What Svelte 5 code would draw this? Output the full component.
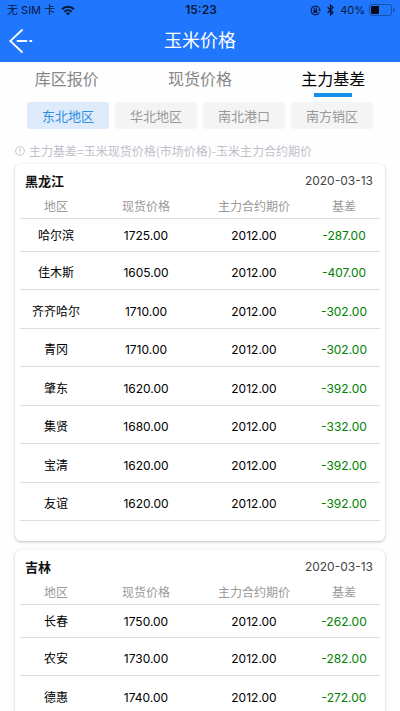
<script>
  let tabs = ['库区报价', '现货价格', '主力基差']
  let activeTab = '主力基差'

  let areas = ['东北地区', '华北地区', '南北港口', '南方销区']
  let activeArea = '东北地区'

  let provinces = [
    {
      name: '黑龙江',
      date: '2020-03-13',
      rows: [
        ['哈尔滨', '1725.00', '2012.00', '-287.00'],
        ['佳木斯', '1605.00', '2012.00', '-407.00'],
        ['齐齐哈尔', '1710.00', '2012.00', '-302.00'],
        ['青冈', '1710.00', '2012.00', '-302.00'],
        ['肇东', '1620.00', '2012.00', '-392.00'],
        ['集贤', '1680.00', '2012.00', '-332.00'],
        ['宝清', '1620.00', '2012.00', '-392.00'],
        ['友谊', '1620.00', '2012.00', '-392.00']
      ]
    },
    {
      name: '吉林',
      date: '2020-03-13',
      rows: [
        ['长春', '1750.00', '2012.00', '-262.00'],
        ['农安', '1730.00', '2012.00', '-282.00'],
        ['德惠', '1740.00', '2012.00', '-272.00']
      ]
    }
  ]
</script>

<header>
  <div class="status">
    <div class="side">
      <span>无 SIM 卡</span>
      <svg width="14" height="11" viewBox="0 0 14 11" fill="none" stroke="currentColor" stroke-width="2">
        <path d="M1 4.2a8.5 8.5 0 0 1 12 0M3.3 6.7a5.3 5.3 0 0 1 7.4 0" />
        <path d="M7 10.4L4.9 8.3a3 3 0 0 1 4.2 0z" fill="currentColor" stroke="none" />
      </svg>
    </div>
    <div class="time">15:23</div>
    <div class="side right">
      <svg width="11" height="11" viewBox="0 0 11 11" fill="none" stroke="currentColor" stroke-width="1.1">
        <path d="M9.3 7.6A4.4 4.4 0 1 1 9.8 4.6" />
        <path d="M8.2 4.6h2.8L9.7 6.5z" fill="currentColor" stroke="none" />
        <rect x="3.4" y="4.9" width="3.8" height="2.9" fill="currentColor" stroke="none" />
        <path d="M4.1 5V4a1.2 1.2 0 0 1 2.4 0v1" stroke-width=".9" />
      </svg>
      <svg class="bluetooth" width="7" height="12" viewBox="0 0 7 12" fill="none" stroke="currentColor" stroke-width="1.3">
        <path d="M.6 3.3L6 8.5 3.5 10.8V1.2L6 3.5.6 8.7" />
      </svg>
      <span>40%</span>
      <svg width="26" height="12" viewBox="0 0 26 12" fill="none">
        <rect x=".5" y=".5" width="22" height="11" rx="2" stroke="#1650a8" />
        <rect x="2" y="2" width="8" height="8" rx="1" fill="#030b1c" />
        <path d="M24 4v4a2 2 0 0 0 0-4z" fill="#1650a8" />
      </svg>
    </div>
  </div>
  <div class="nav">
    <button class="back" aria-label="返回">
      <svg width="24" height="24" viewBox="0 0 24 24" fill="none" stroke="currentColor" stroke-width="1.8" stroke-linecap="round">
        <path d="M13 1L1.2 12 13 23M8.5 12h9M21.2 12h1.2" />
      </svg>
    </button>
    <h1>玉米价格</h1>
  </div>
</header>

<main>
  <div class="tabs">
    {#each tabs as tab}
      <button class:active={tab === activeTab} on:click={() => activeTab = tab}>{tab}</button>
    {/each}
  </div>

  <div class="areas">
    {#each areas as area}
      <button class:active={area === activeArea} on:click={() => activeArea = area}>{area}</button>
    {/each}
  </div>

  <p class="note">
    <svg width="10" height="10" viewBox="0 0 10 10" fill="none" stroke="currentColor">
      <circle cx="5" cy="5" r="4.4" stroke-width=".9" />
      <path d="M5 2.3v3.4M5 6.7v1" />
    </svg>
    主力基差=玉米现货价格(市场价格)-玉米主力合约期价
  </p>

  {#each provinces as province}
    <section class="card">
      <div class="title">
        <h2>{province.name}</h2>
        <span>{province.date}</span>
      </div>
      <table>
        <thead>
          <tr>
            <th class="place">地区</th>
            <th>现货价格</th>
            <th>主力合约期价</th>
            <th class="place">基差</th>
          </tr>
        </thead>
        <tbody>
          {#each province.rows as row}
            <tr>
              <td>{row[0]}</td>
              <td>{row[1]}</td>
              <td>{row[2]}</td>
              <td class="basis">{row[3]}</td>
            </tr>
          {/each}
        </tbody>
      </table>
    </section>
  {/each}
</main>

<style>
  :global(body) {
    background-color: #fefefe;
    font-family: Inter, "Noto Sans CJK SC", sans-serif;
  }
  button {
    font-family: inherit;
    border: none;
    padding: 0;
    cursor: pointer;
  }

  header {
    background-color: #2077fd;
  }
  .status {
    display: flex;
    align-items: center;
    height: 20px;
    padding: 0 5px 0 7px;
    color: #06183a;
    font-size: 11px;
    line-height: 20px;
  }
  .side {
    display: flex;
    align-items: center;
    flex: 1;
    gap: 6px;
  }
  .right {
    justify-content: flex-end;
    gap: 4px;
  }
  .bluetooth {
    margin: 0 2px;
  }
  .time {
    font-size: 12px;
    font-weight: 600;
  }
  .nav {
    display: grid;
    grid-template-columns: 40px 1fr 40px;
    align-items: center;
    height: 42px;
    color: #fff;
  }
  .back {
    display: flex;
    padding-left: 9px;
    background: none;
    color: inherit;
  }
  h1 {
    margin: 0;
    font-size: 18px;
    font-weight: 400;
    line-height: 42px;
    text-align: center;
  }

  .tabs {
    display: flex;
    height: 35px;
  }
  .tabs button {
    display: flex;
    flex-direction: column;
    align-items: center;
    justify-content: space-between;
    flex: 1;
    background: none;
    color: #888;
    font-size: 16px;
    line-height: 35px;
  }
  .tabs .active {
    color: #000;
  }
  .tabs .active::after {
    content: "";
    width: 38px;
    height: 4px;
    margin-top: -4px;
    background-color: #168de8;
  }

  .areas {
    display: flex;
    gap: 6px;
    padding: 5px 27px 0;
  }
  .areas button {
    flex: 1;
    height: 27px;
    border-radius: 3px;
    background-color: #f4f4f4;
    color: #999;
    font-size: 13px;
  }
  .areas .active {
    background-color: #deebfb;
    color: #2f8ee0;
  }

  .note {
    display: flex;
    align-items: center;
    gap: 4px;
    margin: 12px 15px 4px;
    color: #bdc1ca;
    font-family: "Noto Sans CJK SC", sans-serif;
    font-size: 12px;
    line-height: 19px;
  }

  .card {
    margin: 0 15px 9px;
    padding: 0 5px 20px;
    border-radius: 6px;
    background-color: #fff;
    box-shadow: 0 1px 3px rgba(0, 0, 0, .25);
  }
  .title {
    display: flex;
    align-items: center;
    justify-content: space-between;
    height: 32px;
    padding: 0 7px 0 5px;
    color: #444;
    font-size: 12px;
  }
  h2 {
    margin: 0;
    color: #111;
    font-size: 13px;
    font-weight: 700;
  }
  table {
    width: 100%;
    table-layout: fixed;
    border-collapse: collapse;
    font-size: 12px;
    line-height: 16px;
    text-align: center;
  }
  th, td {
    padding: 0;
    border-bottom: 1px solid #ddd;
  }
  th {
    height: 22px;
    color: #999;
    font-weight: 400;
  }
  .place {
    width: 20%;
  }
  td {
    height: 38px;
    padding-top: 5px;
    box-sizing: border-box;
    color: #000;
  }
  tr:nth-child(odd) td {
    height: 39px;
  }
  tr:first-child td {
    height: 33px;
    padding-top: 1px;
  }
  td.basis {
    color: #008000;
  }
</style>
